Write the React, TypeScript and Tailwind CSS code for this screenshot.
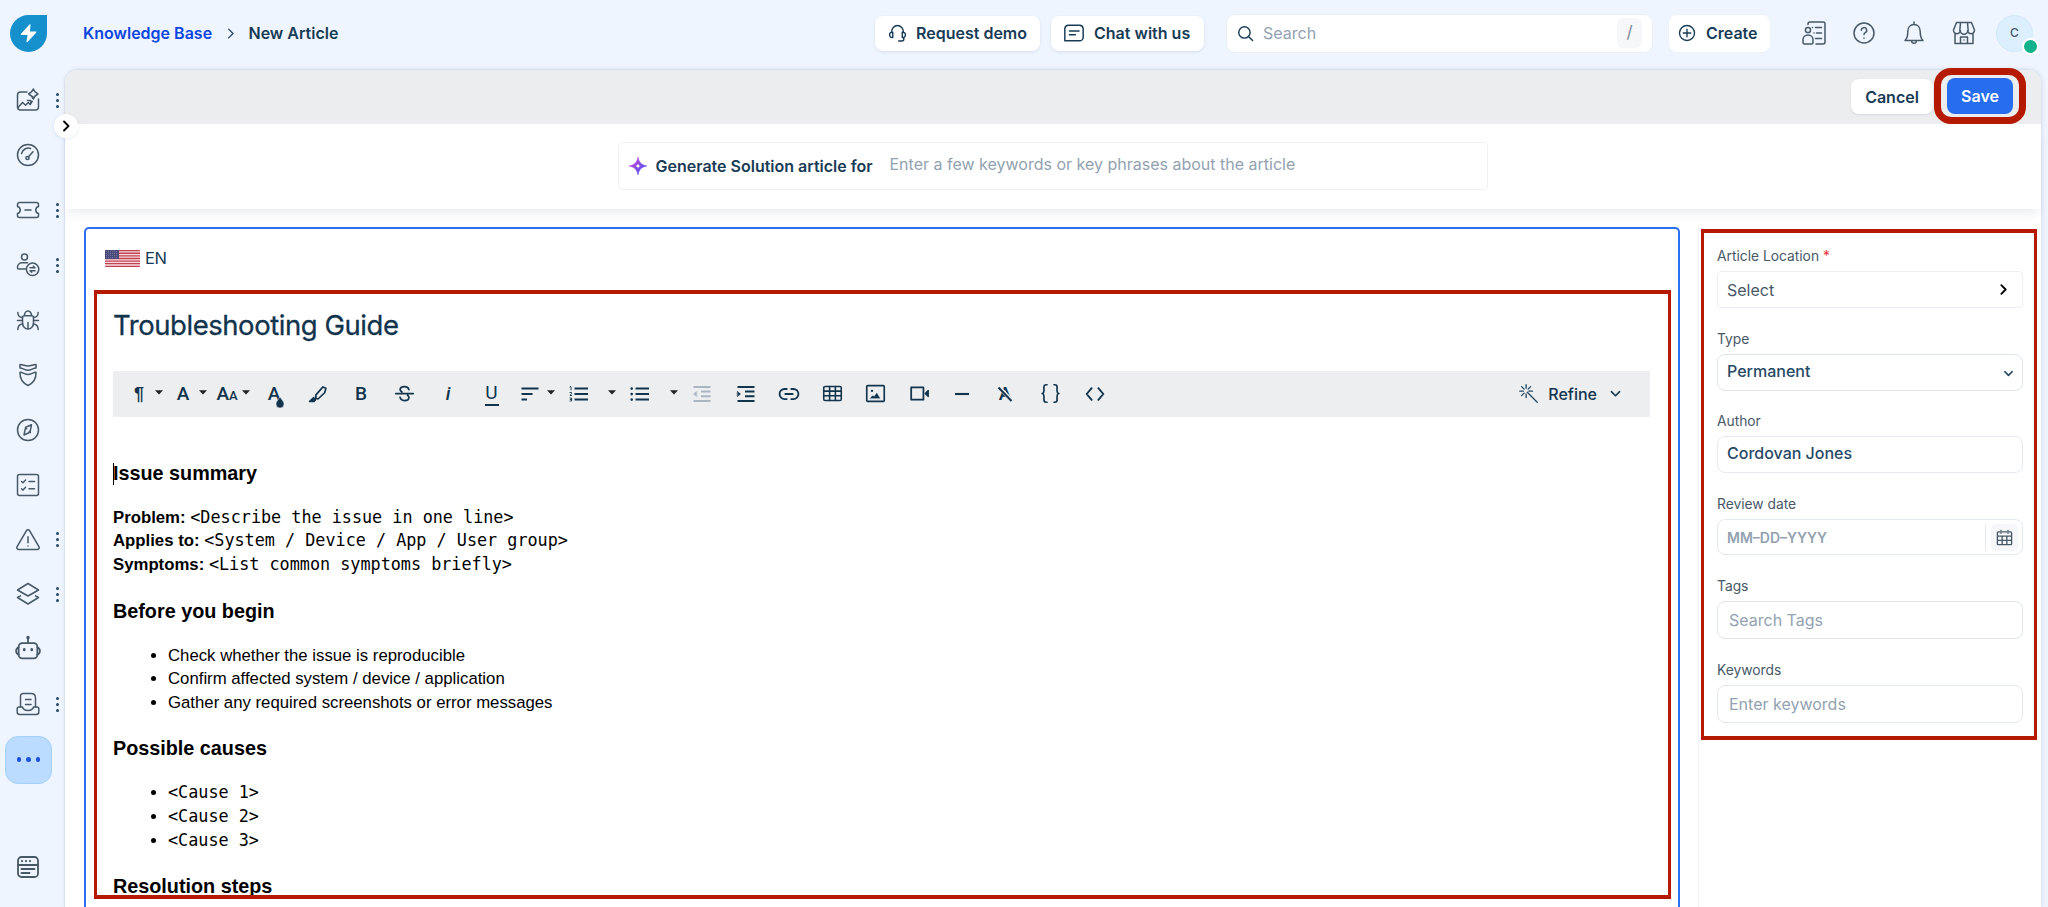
import type { ReactNode } from "react";

type IconProps = { children: ReactNode; size?: number; sw?: number; className?: string };

function Icon({ children, size = 24, sw = 1.5, className = "" }: IconProps) {
  return (
    <svg
      width={size}
      height={size}
      viewBox="0 0 24 24"
      fill="none"
      stroke="currentColor"
      strokeWidth={sw}
      strokeLinecap="round"
      strokeLinejoin="round"
      className={`shrink-0 ${className}`}
    >
      {children}
    </svg>
  );
}

const navItems: { name: string; dots?: boolean; size?: number; icon: ReactNode }[] = [
  {
    name: "analytics",
    dots: true,
    icon: (
      <>
        <path d="M11 4H4.500a3 3 0 0 0-3 3v12a3 3 0 0 0 3 3h15a3 3 0 0 0 3-3v-8" />
        <path d="M2 19.500l4.600-5 3 2.800 2.600-2.800 2 2 2-3.200M11.500 12.500h3.200v3" />
        <path d="M17.300 1c.8 2.500 1.900 3.700 4.700 5-2.800 1.300-3.900 2.500-4.700 5-.8-2.500-1.900-3.700-4.700-5 2.800-1.300 3.900-2.500 4.700-5z" />
      </>
    ),
  },
  {
    name: "dashboard",
    icon: (
      <>
        <circle cx="12" cy="12" r="10.500" />
        <path d="M5.500 10.500a7 7 0 0 1 9-5M12.500 13.700l4.500-5" />
        <circle cx="11.500" cy="15" r="1.600" />
      </>
    ),
  },
  {
    name: "tickets",
    dots: true,
    icon: (
      <>
        <path d="M3.500 4.500h17a2 2 0 0 1 2 2v2a3.600 3.600 0 0 0 0 7v2a2 2 0 0 1-2 2h-17a2 2 0 0 1-2-2v-2a3.600 3.600 0 0 0 0-7v-2a2 2 0 0 1 2-2z" />
        <path d="M9 12h6" />
      </>
    ),
  },
  {
    name: "customers",
    dots: true,
    icon: (
      <>
        <circle cx="8.500" cy="4" r="3" />
        <path d="M9.500 16H2.500a1 1 0 0 1-1-1v-1a4.500 4.500 0 0 1 4.500-4.200h5.500" />
        <circle cx="16.600" cy="16.300" r="6.200" />
        <path d="M14 14.800h5l-1.700-1.500M19 17.800h-5l1.700 1.500" />
      </>
    ),
  },
  {
    name: "problems",
    icon: (
      <>
        <path d="M6.500 9.500c0-1 .8-1.800 1.800-1.800h7.400c1 0 1.800.8 1.800 1.800v5.500a5.500 6 0 0 1-11 0z" />
        <path d="M8.500 7.500a3.500 4.500 0 0 1 7 0M12 14.500v6M6.500 12.500H1.500M17.500 12.500h5M6.500 9.500C3.500 9.500 2 8 1.800 4.500M17.500 9.500c3 0 4.500-1.500 4.700-5M6.700 16C3.500 16 2 18 1.800 21.500M17.300 16c3.200 0 4.700 2 4.900 5.500" />
      </>
    ),
  },
  {
    name: "changes",
    icon: (
      <>
        <path d="M4 1.500c3 0 5 1.500 8 1.500s5-1.500 8-1.500V5c-3 .2-5 2.300-8 2.300S7 5.200 4 5z" />
        <path d="M4 9.200c3 .2 5 2.300 8 2.300s5-2.100 8-2.300c.3 6-2.800 10.800-8 13.300C6.800 20 3.700 15.200 4 9.200z" />
      </>
    ),
  },
  {
    name: "releases",
    icon: (
      <>
        <circle cx="12" cy="12" r="10.500" />
        <path d="M15.500 6.800l-5.800 2.400-1.700 7.800 6-2.700zM9.500 9.500l1.200 1.200M13.200 13.200l1.200 1.200" />
      </>
    ),
  },
  {
    name: "tasks",
    icon: (
      <>
        <rect x="1.500" y="1.500" width="21" height="21" rx="2" />
        <path d="M5.500 8.500l1.500 1.300 2.600-2.800M13 8.500h5.500M5.500 15.800l1.500 1.300 2.600-2.800M13 15.800h5.500" />
      </>
    ),
  },
  {
    name: "alerts",
    dots: true,
    icon: (
      <>
        <path d="M10.300 2.800a2 2 0 0 1 3.400 0l9.200 15.800a2 2 0 0 1-1.700 3H2.800a2 2 0 0 1-1.700-3z" />
        <path d="M12 8.800v6M12 18v.1" />
      </>
    ),
  },
  {
    name: "assets",
    dots: true,
    icon: (
      <>
        <path d="M12 1.500L22.500 8 12 14 1.500 8z" />
        <path d="M4.500 13.800L1.500 15.500 12 22l10.500-6.500-3-1.700" />
      </>
    ),
  },
  {
    name: "bots",
    size: 28,
    icon: (
      <>
        <rect x="4" y="7" width="16" height="13" rx="3" />
        <path d="M12 7V3M4 10.500a3.500 3.500 0 0 0 0 6.500M20 10.500a3.500 3.500 0 0 1 0 6.500" />
        <path d="M8.800 12.200v.6M15.200 12.200v.6" strokeWidth="2.200" />
        <circle cx="12" cy="2.200" r=".8" fill="currentColor" />
      </>
    ),
  },
  {
    name: "solutions",
    dots: true,
    icon: (
      <>
        <path d="M4.500 15V4a2.500 2.500 0 0 1 2.500-2.500h8c3 0 4.500 1.500 4.500 4.500v9" />
        <path d="M9.500 7.500h5.500M9.500 12.500h5.500M3 15h3.500c.7 2.300 2.500 3.500 5.500 3.500s4.800-1.200 5.500-3.500H21a1.800 1.800 0 0 1 1.800 1.800V20a2.500 2.500 0 0 1-2.500 2.500H3.700A2.500 2.500 0 0 1 1.200 20v-3.200A1.800 1.800 0 0 1 3 15z" />
      </>
    ),
  },
];

function Sidebar() {
  return (
    <aside className="flex w-16 shrink-0 flex-col pt-1 text-[#475867]">
      {navItems.map((item) => (
        <div key={item.name} className="flex h-[54.9px] shrink-0 items-center">
          <div className="flex w-14 justify-center">
            <Icon size={item.size ?? 24}>{item.icon}</Icon>
          </div>
          {item.dots && (
            <div className="flex w-[3px] flex-col gap-[3px]">
              <i className="size-[3px] rounded-full bg-[#264966]" />
              <i className="size-[3px] rounded-full bg-[#264966]" />
              <i className="size-[3px] rounded-full bg-[#264966]" />
            </div>
          )}
        </div>
      ))}
      <div className="ml-[5px] mt-[4px] flex h-12 w-[47px] shrink-0 items-center justify-center gap-[5px] rounded-[13px] border border-[#a5d0fb] bg-[#bbdcfe]">
        <i className="size-[4.5px] rounded-full bg-[#1b50dd]" />
        <i className="size-[4.5px] rounded-full bg-[#1b50dd]" />
        <i className="size-[4.5px] rounded-full bg-[#1b50dd]" />
      </div>
      <div className="mt-[71px] flex w-14 justify-center">
        <Icon size={24} sw={1.8}>
          <rect x="2" y="2" width="20" height="20" rx="3.500" />
          <path d="M2 10h20M5.500 14h13M5.500 18h8" />
          <path d="M6 6v.1M10 6v.1M14 6v.1" strokeWidth="2.200" />
        </Icon>
      </div>
    </aside>
  );
}

function Header() {
  return (
    <header className="flex h-[69px] shrink-0 items-center pb-[18px] pl-[10px] pr-[15px] pt-[15px]">
      <div className="flex h-[37px] w-[37px] items-center justify-center rounded-bl-full rounded-br-full rounded-tl-full rounded-tr-[5px] bg-[#168fcd]">
        <svg width="17" height="19" viewBox="0 0 17 19" fill="#fff">
          <path d="M9.500.5 1 9.700c-.5.7-.2 1.300.6 1.300h6L6.500 17.600c-.1.800.5 1 1 .4l8.600-9.300c.4-.6.200-1.100-.5-1.100H9.800l.8-6.600c0-.8-.6-1-1.100-.5z" />
        </svg>
      </div>
      <nav className="ml-9 flex items-center text-[16px] font-semibold">
        <a className="w-[128.500px] whitespace-nowrap text-[#0b45e0]">Knowledge Base</a>
        <Icon size={15} sw={2.2} className="mx-[11px] text-[#264966]">
          <path d="M9 5l7 7-7 7" />
        </Icon>
        <span className="whitespace-nowrap text-[#183b56]">New Article</span>
      </nav>

      <div className="ml-auto flex items-center text-[#183b56]">
        <button className="flex h-[35px] w-[165px] items-center rounded-lg bg-white pl-[13px] text-[16px] font-semibold shadow-[0_1px_3px_rgba(24,59,86,0.12)]">
          <Icon size={19} sw={1.8}>
            <path d="M6 10.500v6.500c-2.500.3-4-1-4-3.300s1.500-3.500 4-3.200zM18 10.500v6.500c2.500.3 4-1 4-3.300s-1.500-3.500-4-3.200zM4.500 10a7.500 8 0 0 1 15 0M20 17.500v1.500a2.500 2.500 0 0 1-2.500 2.500h-4" />
          </Icon>
          <span className="ml-[9px] whitespace-nowrap">Request demo</span>
        </button>
        <button className="ml-[11px] flex h-[35px] w-[153px] items-center rounded-lg bg-white pl-[12px] text-[16px] font-semibold shadow-[0_1px_3px_rgba(24,59,86,0.12)]">
          <Icon size={22} sw={1.6}>
            <path d="M2 20.500V7a4 4 0 0 1 4-3.500h12A4 4 0 0 1 22 7v9.500a4 4 0 0 1-4 4zM7 9.800h10.500M7 14h6.500" />
          </Icon>
          <span className="ml-[9px] whitespace-nowrap">Chat with us</span>
        </button>
        <div className="ml-[22px] flex h-[39px] w-[427px] items-center rounded-[9px] border border-[#e9eff7] bg-white pl-[10px] pr-[10px]">
          <Icon size={17} sw={2}>
            <circle cx="10.500" cy="10.500" r="8" />
            <path d="M16.500 16.500l5.500 5.500" />
          </Icon>
          <span className="ml-[9px] text-[16px] text-[#92a2b1]">Search</span>
          <kbd className="ml-auto flex h-[30px] w-[25px] items-center justify-center rounded-md bg-[#f5f7f9] font-[Inter] text-[17px] text-[#7b8c9c]">/</kbd>
        </div>
        <button className="ml-[15px] flex h-[39px] w-[103px] items-center rounded-[9px] border border-[#eef3fa] bg-white pl-[9px] text-[16px] font-semibold">
          <Icon size={18} sw={1.8}>
            <circle cx="12" cy="12" r="10" />
            <path d="M12 7v10M7 12h10" />
          </Icon>
          <span className="ml-[10px]">Create</span>
        </button>
        <Icon className="ml-[31px] text-[#475867]">
          <path d="M6 3.500V3a2 2 0 0 1 2-2h13a2 2 0 0 1 2 2v18a2 2 0 0 1-2 2h-7M10.500 6.500h.1M13.500 6.500h6M12 12h.1M14.500 12h5M13.500 17.500h6" />
          <circle cx="6" cy="9" r="2.600" />
          <path d="M1 21.500v-3a5 4.500 0 0 1 10 0v3a1.500 1.500 0 0 1-1.500 1.500h-7A1.500 1.500 0 0 1 1 21.500z" />
        </Icon>
        <Icon className="ml-[26px] text-[#475867]">
          <circle cx="12" cy="12" r="10" />
          <path d="M9.300 9.300a2.700 2.700 0 1 1 4 2.400c-.9.500-1.300 1-1.300 1.900M12 17v.2" />
        </Icon>
        <Icon className="ml-[26px] text-[#475867]">
          <path d="M12 1v2M3 19.500c2-1.700 2.800-3.500 2.800-9 0-4 2.500-7 6.200-7s6.200 3 6.200 7c0 5.500.8 7.300 2.800 9zM9.500 20c.5 3 4.500 3 5 0" />
        </Icon>
        <Icon className="ml-[26px] text-[#475867]">
          <path d="M4.500 1.500h15L22.500 9a3.400 3.400 0 0 1-6.800.5 3.700 3.700 0 0 1-7.400 0A3.400 3.400 0 0 1 1.500 9zM8.500 2l-.7 7.500M15.500 2l.7 7.500M3 12.500V22.500h18V12.500M8.500 22v-6h7v6M12 19v.1" />
        </Icon>
        <div className="relative ml-[20px] flex h-[37px] w-[37px] items-center justify-center rounded-full border border-[#d3e8fb] bg-[#dcefff] text-[12px] font-medium text-[#475867]">
          C
          <i className="absolute -bottom-[4px] -right-[7px] size-[17px] rounded-full border-2 border-white bg-[#12b28d]" />
        </div>
      </div>
    </header>
  );
}

function Caret({ className }: { className: string }) {
  return (
    <svg width="8" height="5" viewBox="0 0 8 5" className={`mb-[3px] shrink-0 ${className}`}>
      <path d="M0 .3h8L4 4.500z" fill="#222" />
    </svg>
  );
}

function Tool({ children, className = "ml-[19.5px]", size = 24, sw = 2 }: { children: ReactNode; className?: string; size?: number; sw?: number }) {
  return (
    <button className={`flex size-6 shrink-0 items-center justify-center ${className}`}>
      <Icon size={size} sw={sw}>{children}</Icon>
    </button>
  );
}

function Letter({ children, className }: { children: ReactNode; className: string }) {
  return (
    <button className={`relative flex h-6 w-6 shrink-0 items-center justify-center font-[Roboto] text-[19px] leading-6 ${className}`}>
      {children}
    </button>
  );
}

function Toolbar() {
  return (
    <div className="flex h-[46px] items-center bg-[#eceef0] pb-px text-[#12344d]">
      <Letter className="ml-[14px]">
        <span className="font-['Liberation_Sans'] text-[18px] font-bold">¶</span>
      </Letter>
      <Caret className="ml-[4px]" />
      <Letter className="ml-[8px] font-medium">A</Letter>
      <Caret className="ml-[4px]" />
      <Letter className="ml-[8px] font-medium">
        A<span className="mt-[4px] text-[13px]">A</span>
      </Letter>
      <Caret className="ml-[3px]" />
      <Letter className="ml-[12px] font-medium">
        A
        <svg width="8" height="11" viewBox="0 0 8 11" className="absolute -bottom-[2px] right-[2px]">
          <path d="M4 0c2 2.800 4 4.800 4 7a4 4 0 0 1-8 0c0-2.200 2-4.200 4-7z" fill="currentColor" stroke="#eceef0" strokeWidth=".5" />
        </svg>
      </Letter>
      <Tool className="ml-[20px]" size={20} sw={2}>
        <path d="M9.500 13l8.500-9.500 3.500 1.500-1.500 5.500-8 7.500-3-1zM9.500 13v4" />
        <path d="M6.500 16.500L2 20.800h5.500l1.500-1.800z" fill="currentColor" />
      </Tool>
      <Letter className="ml-[19px] font-medium">B</Letter>
      <Tool size={21} sw={2}>
        <path d="M17 7.500C16.500 5 14.500 4 12 4 9 4 7 5.500 7 7.500c0 1.200.7 2 2 2.600M7 16.500c.5 2.500 2.500 3.500 5 3.500 3 0 5-1.500 5-3.500 0-1.200-.5-2-1.500-2.600M2 12h20" />
      </Tool>
      <Letter className="ml-[19.5px] font-medium italic">i</Letter>
      <Letter className="ml-[19.5px]">
        <span className="-mt-[2px]">U</span>
        <i className="absolute bottom-0 left-[5px] h-[2px] w-[14px] bg-current" />
      </Letter>
      <Tool className="ml-[14px]" sw={2.1}>
        <path d="M3.500 6.500h17M3.500 12h11M3.500 17.500h5.500" strokeLinecap="butt" />
      </Tool>
      <Caret className="ml-[5px]" />
      <Tool className="ml-[12px]">
        <path d="M7.500 6.500H21M7.500 12H21M7.500 17.500H21" strokeLinecap="butt" />
        <path d="M3 5l1-.5V8M3 10.500h1.500v1L3 13.500h1.700M3 16h1.600v3H3M3.300 17.500h1.200" strokeWidth=".9" />
      </Tool>
      <Caret className="ml-[17.500px]" />
      <Tool className="ml-[12px]">
        <path d="M7.500 6.500H21M7.500 12H21M7.500 17.500H21" strokeLinecap="butt" />
        <path d="M3.700 6.500v.1M3.700 12v.1M3.700 17.500v.1" strokeWidth="2.600" />
      </Tool>
      <Caret className="ml-[17.5px]" />
      <Tool className="ml-[12.5px] text-[#aab6c1]" sw={1.9}>
        <path d="M3.500 5h17M11 9.500h9.500M11 14.300h9.500M3.500 19h17" strokeLinecap="butt" />
        <path d="M6.500 9.500L3.500 12l3 2.500z" fill="currentColor" strokeWidth=".5" />
      </Tool>
      <Tool sw={2.1}>
        <path d="M3.500 5h17M11 9.500h9.500M11 14.300h9.500M3.500 19h17" strokeLinecap="butt" />
        <path d="M3.500 9.500l3 2.500-3 2.500z" fill="currentColor" strokeWidth=".5" />
      </Tool>
      <Tool className="ml-[19px]" size={22}>
        <path d="M9.500 6.500H7.200a5.500 5.500 0 0 0 0 11h2.300M14.500 6.500h2.300a5.500 5.500 0 0 1 0 11h-2.300M8 12h8" />
      </Tool>
      <Tool size={21} sw={1.8}>
        <rect x="2" y="4" width="20" height="16" rx="1.500" />
        <path d="M2 9.300h20M2 14.600h20M8.700 4v16M15.300 4v16" />
      </Tool>
      <Tool size={21} sw={1.9}>
        <rect x="2" y="3" width="20" height="18" rx="1" />
        <path d="M6 17.500l2.500-3 2 1 3-4 3.500 6z" fill="currentColor" strokeWidth=".3" />
        <path d="M8 9v.1" strokeWidth="2.600" />
      </Tool>
      <Tool className="ml-[19.5px]" size={21}>
        <path d="M2.500 5h14v14h-14z" />
        <path d="M18.500 12l3.500-3.500v7z" fill="currentColor" strokeWidth="1.500" />
      </Tool>
      <Tool className="ml-[18.500px]" sw={2.1}>
        <path d="M5 12h14" strokeLinecap="butt" />
      </Tool>
      <Letter className="ml-[19.5px] font-medium">
        A
        <svg width="18" height="18" viewBox="0 0 18 18" className="absolute left-[3px] top-[3px]">
          <path d="M3.500 2.500l12 13" stroke="#eceef0" strokeWidth="4" />
          <path d="M2.500 2.500l13 13.500" stroke="currentColor" strokeWidth="2" />
        </svg>
      </Letter>
      <Tool className="ml-[21px]" size={21} sw={1.9}>
        <path d="M8 2H7a2.500 2.500 0 0 0-2.500 2.500V9c0 2-1 2.800-2 3 1 .2 2 1 2 3v4.500A2.500 2.500 0 0 0 7 22h1M16 2h1a2.500 2.500 0 0 1 2.500 2.500V9c0 2 1 2.800 2 3-1 .2-2 1-2 3v4.500A2.500 2.500 0 0 1 17 22h-1" />
      </Tool>
      <Tool className="ml-[20.5px]" size={20} sw={2.3}>
        <path d="M8 5L2 12l6 7M16 5l6 7-6 7" />
      </Tool>
      <div className="ml-auto flex items-center pr-[28px]">
        <Icon size={19} sw={1.7} className="text-[#264966]">
          <path d="M10.500 10.500L23 23M9 1v4.500M9 12.500V17M1 9h4.500M12.500 9H17M3.300 3.300l3.200 3.200M14.700 3.300l-3.200 3.200M3.300 14.700l3.200-3.200" />
        </Icon>
        <span className="ml-[10px] text-[16px] font-medium">Refine</span>
        <Icon size={13} sw={2.8} className="ml-[12px]">
          <path d="M4.500 8.500l7.500 7.500 7.500-7.500" />
        </Icon>
      </div>
    </div>
  );
}

const facts = [
  { label: "Problem:", value: "<Describe the issue in one line>" },
  { label: "Applies to:", value: "<System / Device / App / User group>" },
  { label: "Symptoms:", value: "<List common symptoms briefly>" },
];

const checks = [
  "Check whether the issue is reproducible",
  "Confirm affected system / device / application",
  "Gather any required screenshots or error messages",
];

const causes = ["<Cause 1>", "<Cause 2>", "<Cause 3>"];

function ArticleBody() {
  return (
    <div className="relative pt-[42.5px] font-['Liberation_Sans',Arial,sans-serif] text-[16.76px] leading-[23.7px] text-black">
      <i className="absolute left-0 top-[46px] h-[22px] w-px bg-black" />
      <h2 className="text-[19.8px] font-bold leading-[26px]">Issue summary</h2>
      <div className="mb-[21px] mt-[20px]">
        {facts.map((f) => (
          <p key={f.label} className="h-[23.7px]">
            <b>{f.label}</b>{" "}
            <span className="font-['DejaVu_Sans_Mono',monospace] text-[16.8px]">{f.value}</span>
          </p>
        ))}
      </div>
      <h2 className="text-[19.8px] font-bold leading-[26px]">Before you begin</h2>
      <ul className="mb-[20.5px] mt-[20px] list-disc pl-[55px]">
        {checks.map((c) => (
          <li key={c}>{c}</li>
        ))}
      </ul>
      <h2 className="text-[19.8px] font-bold leading-[26px]">Possible causes</h2>
      <ul className="mb-[20.5px] mt-[20px] list-disc pl-[55px]">
        {causes.map((c) => (
          <li key={c} className="h-[23.7px]">
            <span className="font-['DejaVu_Sans_Mono',monospace] text-[16.8px]">{c}</span>
          </li>
        ))}
      </ul>
      <h2 className="text-[19.8px] font-bold leading-[26px]">Resolution steps</h2>
    </div>
  );
}

function Flag() {
  return (
    <svg width="35" height="17" viewBox="0 0 35 17" className="rounded-[1px]">
      <rect width="35" height="17" fill="#f3dfe2" />
      <path
        d="M0 .65h35M0 3.270h35M0 5.880h35M0 8.500h35M0 11.100h35M0 13.700h35M0 16.350h35"
        stroke="#c5404f"
        strokeWidth="1.300"
      />
      <rect width="14" height="9" fill="#4a4a7d" />
      <path d="M1 1.500h12M1 3.500h12M1 5.500h12M1 7.500h12" stroke="#9a9abb" strokeWidth=".6" strokeDasharray=".8 1.200" />
    </svg>
  );
}

function Label({ children }: { children: ReactNode }) {
  return <div className="mb-[5px] h-5 whitespace-nowrap text-[13.8px] leading-5 text-[#475867]">{children}</div>;
}

function Properties() {
  return (
    <div className="ml-[18px] flex-1 border-l border-[#f0f2f5]">
      <div className="ml-[2px] mt-[2px] h-[511px] w-[336px] border-x-3 border-y-4 border-[#b51a00] pl-[13px] pr-[11px] pt-[13px] text-[16px] text-[#264966]">
        <Label>
          Article Location <span className="text-[#e43538]">*</span>
        </Label>
        <div className="mb-[21px] flex h-[37px] items-center rounded-[4px] border border-[#ebeef2] px-[9px] text-[#475867]">
          Select
          <Icon size={13} sw={3.4} className="ml-auto mr-[3px] text-black">
            <path d="M8 4l8 8-8 8" />
          </Icon>
        </div>
        <Label>Type</Label>
        <div className="mb-[20px] flex h-[37px] items-center rounded-lg border border-[#dfe4ea] px-[9px] pb-[3px] font-medium">
          Permanent
          <Icon size={11} sw={3.4} className="-mr-[1px] ml-auto mt-[4px]">
            <path d="M4 8l8 8 8-8" />
          </Icon>
        </div>
        <Label>Author</Label>
        <div className="mb-[21px] flex h-[37px] items-center rounded-lg border border-[#e6eaef] px-[9px] pb-[3px] font-medium">
          Cordovan Jones
        </div>
        <Label>Review date</Label>
        <div className="mb-[21px] flex h-9 items-center rounded-lg border border-[#e3e8ed] pl-[9px] pr-[4px] text-[14px] font-semibold text-[#92a2b1]">
          MM–DD–YYYY
          <div className="ml-auto h-[27px] border-l border-[#e6eaef]" />
          <div className="ml-[5px] flex h-[27px] w-[27px] items-center justify-center rounded-[5px] bg-[#f5f7f9] text-[#475867]">
            <Icon size={17} sw={1.9}>
              <path d="M5 4H3.500A1.500 1.500 0 0 0 2 5.500V21a1 1 0 0 0 1 1h18a1 1 0 0 0 1-1V5.500A1.500 1.500 0 0 0 20.500 4H19M9 4h6M7 2v4M17 2v4M2 10h20M2 16h20M8.700 10v12M15.300 10v12" />
            </Icon>
          </div>
        </div>
        <Label>Tags</Label>
        <div className="mb-[21px] flex h-[38px] items-center rounded-lg border border-[#dfe4ea] px-[11px] text-[#92a2b1]">Search Tags</div>
        <Label>Keywords</Label>
        <div className="flex h-[38px] items-center rounded-lg border border-[#e3e8ed] px-[11px] pb-px text-[#92a2b1]">Enter keywords</div>
      </div>
    </div>
  );
}

export default function App() {
  return (
    <div className="flex h-[907px] w-full flex-col overflow-hidden bg-[#eef5ff] font-[Inter,sans-serif]">
      <Header />
      <div className="flex min-h-0 flex-1">
        <Sidebar />
        <main className="relative mr-[7px] flex min-w-0 flex-1 flex-col rounded-t-[14px] border-l border-t border-[#d9e3f0] bg-white shadow-[1px_0_4px_rgba(24,59,86,0.12)]">
          <button className="absolute -left-[11px] top-[44px] z-20 flex size-6 items-center justify-center rounded-full bg-white shadow-[0_1px_4px_rgba(24,59,86,0.1)]">
            <Icon size={12} sw={3.6} className="text-black">
              <path d="M8 3l9 9-9 9" />
            </Icon>
          </button>

          <div className="flex h-[54px] shrink-0 items-center justify-end rounded-t-[13px] bg-[#ecedef] pb-[2px] pr-[15px] text-[16px] font-semibold">
            <button className="mt-[1px] h-[35px] w-[82px] rounded-lg bg-white text-[#183b56] shadow-[0_1px_2px_rgba(24,59,86,0.1)]">Cancel</button>
            <div className="-my-2 ml-px rounded-[17px] border-7 border-[#b51a00] px-[6px] py-[3px]">
              <button className="block h-9 w-[66px] rounded-lg bg-[#266df0] text-white">Save</button>
            </div>
          </div>

          <div className="relative z-10 flex h-[85px] shrink-0 justify-center bg-white pt-[18px] shadow-[0_8px_9px_-3px_rgba(18,52,77,0.08)]">
            <div className="mr-px flex h-[48px] w-[870px] items-center rounded-[5px] border border-[#eff1f3] pb-px pl-[10px] text-[16px]">
              <svg width="18" height="18" viewBox="0 0 18 18">
                <defs>
                  <linearGradient id="spark" x1="0" y1="0" x2="1" y2="1">
                    <stop offset="0" stopColor="#d63bd0" />
                    <stop offset="1" stopColor="#3a55fb" />
                  </linearGradient>
                </defs>
                <path
                  d="M9 .2C10.100 5.600 12.400 7.900 17.800 9 12.400 10.100 10.100 12.400 9 17.800 7.900 12.400 5.600 10.100.2 9 5.600 7.900 7.900 5.600 9 .2zM9 6.200C8.400 7.700 7.700 8.400 6.200 9 7.700 9.600 8.400 10.300 9 11.800 9.600 10.300 10.300 9.600 11.800 9 10.300 8.400 9.600 7.700 9 6.200z"
                  fill="url(#spark)"
                  fillRule="evenodd"
                  stroke="url(#spark)"
                  strokeWidth=".6"
                />
              </svg>
              <span className="ml-[9px] w-[217px] whitespace-nowrap font-semibold text-[#183b56]">Generate Solution article for</span>
              <span className="mb-[3px] ml-[17px] whitespace-nowrap text-[#92a2b1]">Enter a few keywords or key phrases about the article</span>
            </div>
          </div>

          <div className="flex min-h-0 flex-1 pl-[19px] pt-[18px]">
            <section className="relative z-10 w-[1596px] shrink-0 rounded-t-[5px] border-2 border-b-0 border-[#2c70f2] bg-white">
              <div className="flex h-[61px] items-center pb-[3px] pl-[19px] text-[16.5px] text-[#183b56]">
                <Flag />
                <span className="ml-[5px] tracking-[-0.3px]">EN</span>
              </div>
              <div className="ml-[8px] h-[609px] w-[1577px] overflow-hidden border-x-3 border-y-4 border-[#b51a00] pl-[16px] pr-[18px]">
                <h1 className="flex h-[77px] items-center pb-[13px] text-[27.5px] tracking-[-0.45px] text-[#12344d] [-webkit-text-stroke:0.3px_#12344d]">
                  Troubleshooting Guide
                </h1>
                <Toolbar />
                <ArticleBody />
              </div>
            </section>
            <Properties />
          </div>
        </main>
      </div>
    </div>
  );
}
